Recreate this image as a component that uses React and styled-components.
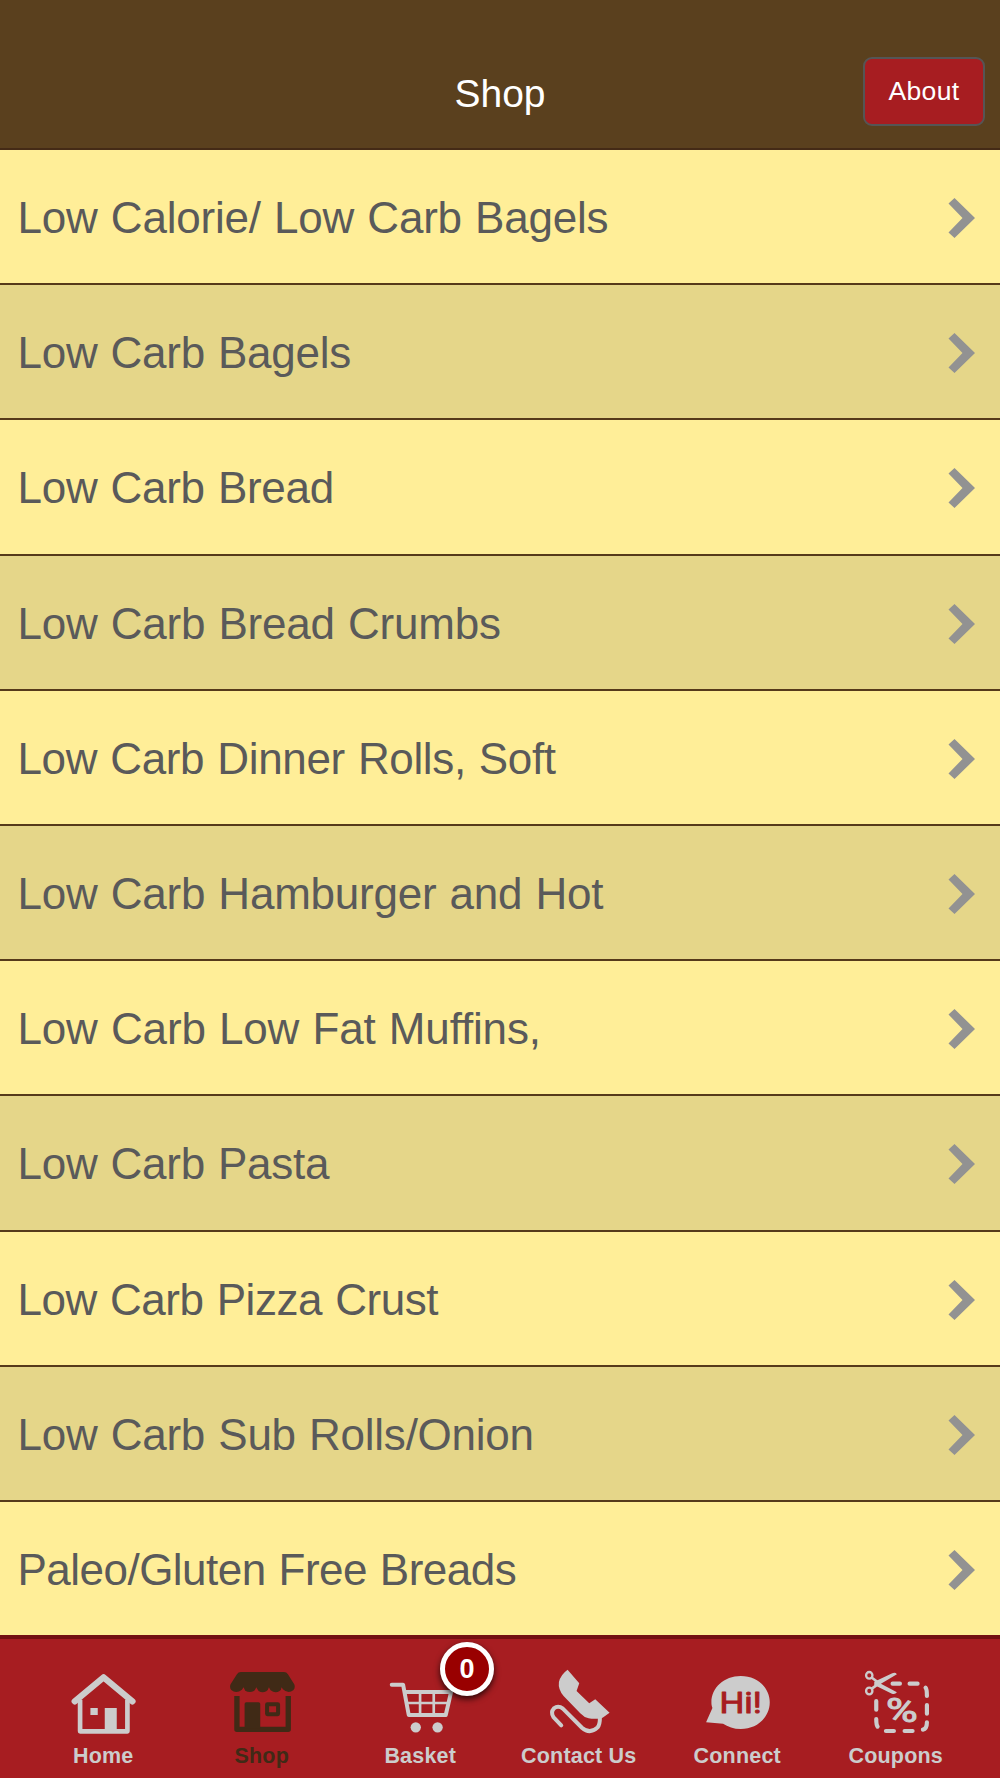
import React from "react";
import styled, { createGlobalStyle } from "styled-components";

const GlobalStyle = createGlobalStyle`
  body { margin: 0; background: #ffee98; }
  * { box-sizing: border-box; }
`;

const Screen = styled.div`
  width: 1000px;
  height: 1778px;
  display: flex;
  flex-direction: column;
  overflow: hidden;
  font-family: "Liberation Sans", Arial, Helvetica, sans-serif;
`;

const Header = styled.header`
  height: 149.6px;
  flex: none;
  display: grid;
  grid-template-columns: 1fr auto 1fr;
  align-items: center;
  padding: 36px 15px 0;
  background: #5a401e;
  border-bottom: 2px solid #442a16;
`;

const Title = styled.h1`
  grid-column: 2;
  margin: 5px 0 0;
  font-size: 39px;
  font-weight: 400;
  line-height: 44px;
  color: #fff;
`;

const HeaderButton = styled.button`
  justify-self: end;
  width: 122px;
  height: 69px;
  padding: 0;
  border: 2px solid #555555;
  border-radius: 9px;
  background: #a71d21;
  color: #fff;
  font: 400 26.5px "Liberation Sans", Arial, sans-serif;
  letter-spacing: 0.3px;
`;

const List = styled.ul`
  flex: none;
  margin: 0;
  padding: 0;
  list-style: none;
`;

const Row = styled.li`
  height: ${(p) => (p.$first ? 135.6 : 135.2)}px;
  display: flex;
  align-items: center;
  justify-content: space-between;
  padding: 3px 25.5px 0 17.5px;
  background: ${(p) => (p.$shaded ? "#e5d689" : "#ffee98")};
  border-bottom: 2px solid #563a1a;
  &:last-child {
    height: 133.2px;
    border-bottom: 0;
  }
`;

const RowLabel = styled.span`
  font-size: 44px;
  line-height: 50px;
  white-space: nowrap;
  color: #5a5a5a;
  word-spacing: 1.2px;
  letter-spacing: ${(p) => p.$spacing}px;
`;

const Chevron = styled.svg`
  width: 27px;
  height: 42px;
  display: block;
`;

const TabBar = styled.nav`
  flex: 1;
  display: grid;
  grid-template-columns: repeat(6, 158.5px);
  padding: 0 25px 0 24px;
  background: #a71d21;
  border-top: 4px solid #741012;
`;

const Tab = styled.a`
  position: relative;
  display: flex;
  flex-direction: column;
  align-items: center;
  padding-top: 28.5px;
  color: ${(p) => (p.$active ? "#402a16" : "#cccccc")};
`;

const TabIcon = styled.svg`
  width: 72px;
  height: 70px;
  flex: none;
  display: block;
  overflow: visible;
`;

const TabLabel = styled.span`
  margin-top: 6px;
  font-size: 21.5px;
  font-weight: 700;
  line-height: 24px;
  letter-spacing: 0.2px;
  white-space: nowrap;
`;

const Badge = styled.span`
  position: absolute;
  left: 99px;
  top: 3px;
  width: 54px;
  height: 54px;
  border: 5px solid #fff;
  border-radius: 50%;
  background: #990000;
  color: #fff;
  font: 700 27px/44px "Liberation Sans", Arial, sans-serif;
  text-align: center;
  box-shadow: 0 3px 6px rgba(0, 0, 0, 0.75);
`;

const HomeIcon = () => (
  <TabIcon viewBox="201.75 141 216 210" fill="none" stroke="currentColor">
    <path d="M225 241 L311.500 169 L398 241" strokeWidth="19" strokeLinecap="round" strokeLinejoin="round" />
    <path d="M241 236 V331 H383 V236" strokeWidth="14" strokeLinejoin="round" />
    <path d="M272 261H294V282H272Z M315 261H351V328H315Z" fill="currentColor" stroke="none" />
  </TabIcon>
);

const ShopIcon = () => (
  <TabIcon viewBox="677.25 141 216 210" fill="none" stroke="currentColor">
    <path
      d="M722 153H851Q859 153 863 160L882 190Q886 200 879 208Q864 220 848 205L844 199Q843 207 838 210Q825 218 811 208L806 199Q804 207 798 211Q786 217 775 210L768 199Q766 206 761 210Q748 217 735 209L730 199L725 206Q708 220 693 207Q687 200 691 190L710 160Q714 153 722 153Z"
      fill="currentColor"
      stroke="none"
    />
    <path d="M710 225V325H864V225" strokeWidth="16" strokeLinejoin="round" />
    <path d="M738 244H775Q780 244 780 249V322H733V249Q733 244 738 244Z" fill="currentColor" stroke="none" />
    <rect x="800.500" y="249.500" width="33" height="30" rx="1" strokeWidth="12" strokeLinejoin="round" />
  </TabIcon>
);

const BasketIcon = () => (
  <TabIcon viewBox="132.75 141 216 210" fill="none" stroke="currentColor">
    <path d="M156 191H190L207 282H318L334 213H196" strokeWidth="12" strokeLinecap="round" strokeLinejoin="round" />
    <path d="M200 246H326M241 215V281M282 215V281" strokeWidth="8" />
    <circle cx="228" cy="319" r="15.500" fill="currentColor" stroke="none" />
    <circle cx="293.500" cy="319" r="15.500" fill="currentColor" stroke="none" />
  </TabIcon>
);

const PhoneIcon = () => (
  <TabIcon viewBox="608.25 141 216 210" fill="none" stroke="currentColor">
    <path
      d="M682 146L717 187L709 210L747 247L765 235L808 275L787 290Q767 296 745 292Q731 289 720 277L670 225Q653 205 656 183Q661 161 682 146Z"
      fill="currentColor"
      stroke="none"
    />
    <path
      d="M663 313L640 289Q630 274 641 262Q654 252 668 263L725 320Q749 341 772 319Q779 311 779 290"
      strokeWidth="12"
      strokeLinecap="round"
    />
  </TabIcon>
);

const ConnectIcon = () => (
  <TabIcon viewBox="123.75 141 216 210">
    <path
      d="M243 165C293 165 330 200 330 244C330 288 293 324 243 324C222 324 204 317 190 308L139 304L158 261C155 254 155 249 155 244C155 200 193 165 243 165Z"
      fill="currentColor"
    />
    <text x="179" y="276" fontFamily="Roboto, sans-serif" fontSize="91" fontWeight="400" textLength="127" lengthAdjust="spacingAndGlyphs" fill="#a71d21" stroke="#a71d21" strokeWidth="3" strokeLinejoin="round">
      Hi!
    </text>
  </TabIcon>
);

const CouponIcon = () => (
  <TabIcon viewBox="599.25 141 216 210" fill="none" stroke="currentColor" strokeLinecap="round">
    <path d="M697 188H719M748 188H772M796 200Q800 204 800 225M800 252V278M800 304Q800 324 788 326M757 330H733M701 330H677M648 240V266M648 294Q648 312 652 317" strokeWidth="12.500" />
    <ellipse cx="627" cy="163" rx="9.500" ry="10" strokeWidth="7" />
    <ellipse cx="627" cy="210" rx="9.500" ry="10" strokeWidth="7" />
    <path d="M636 171L656 186M636 202L656 187" strokeWidth="8" />
    <path d="M642 182L696 157Q705 153 710 160L662 188L710 214Q704 222 695 218L642 192Z" fill="currentColor" stroke="none" />
    <text x="677" y="303" fontFamily="Roboto, sans-serif" fontSize="98" fontWeight="400" textLength="95" lengthAdjust="spacingAndGlyphs" fill="currentColor" strokeWidth="3">
      %
    </text>
  </TabIcon>
);

const categories = [
  { name: "Low Calorie/ Low Carb Bagels", spacing: -0.205 },
  { name: "Low Carb Bagels", spacing: -0.27 },
  { name: "Low Carb Bread", spacing: -0.28 },
  { name: "Low Carb Bread Crumbs", spacing: -0.22 },
  { name: "Low Carb Dinner Rolls, Soft", spacing: -0.35 },
  { name: "Low Carb Hamburger and Hot", spacing: -0.23 },
  { name: "Low Carb Low Fat Muffins,", spacing: -0.16 },
  { name: "Low Carb Pasta", spacing: -0.27 },
  { name: "Low Carb Pizza Crust", spacing: -0.42 },
  { name: "Low Carb Sub Rolls/Onion", spacing: -0.24 },
  { name: "Paleo/Gluten Free Breads", spacing: -0.52 },
];

const tabs = [
  { label: "Home", Icon: HomeIcon },
  { label: "Shop", Icon: ShopIcon, active: true },
  { label: "Basket", Icon: BasketIcon, badge: 0 },
  { label: "Contact Us", Icon: PhoneIcon },
  { label: "Connect", Icon: ConnectIcon },
  { label: "Coupons", Icon: CouponIcon },
];

export default function App() {
  return (
    <Screen>
      <GlobalStyle />
      <Header>
        <Title>Shop</Title>
        <HeaderButton>About</HeaderButton>
      </Header>
      <List>
        {categories.map(({ name, spacing }, i) => (
          <Row key={name} $first={i === 0} $shaded={i % 2 === 1}>
            <RowLabel $spacing={spacing}>{name}</RowLabel>
            <Chevron viewBox="0 0 27 42">
              <path d="M0.500 6.500L6.500 1L27 21L6.500 41L0.500 35.500L14.500 21Z" fill="#929292" />
            </Chevron>
          </Row>
        ))}
      </List>
      <TabBar>
        {tabs.map(({ label, Icon, active, badge }) => (
          <Tab key={label} $active={active}>
            <Icon />
            <TabLabel>{label}</TabLabel>
            {badge !== undefined && <Badge>{badge}</Badge>}
          </Tab>
        ))}
      </TabBar>
    </Screen>
  );
}
